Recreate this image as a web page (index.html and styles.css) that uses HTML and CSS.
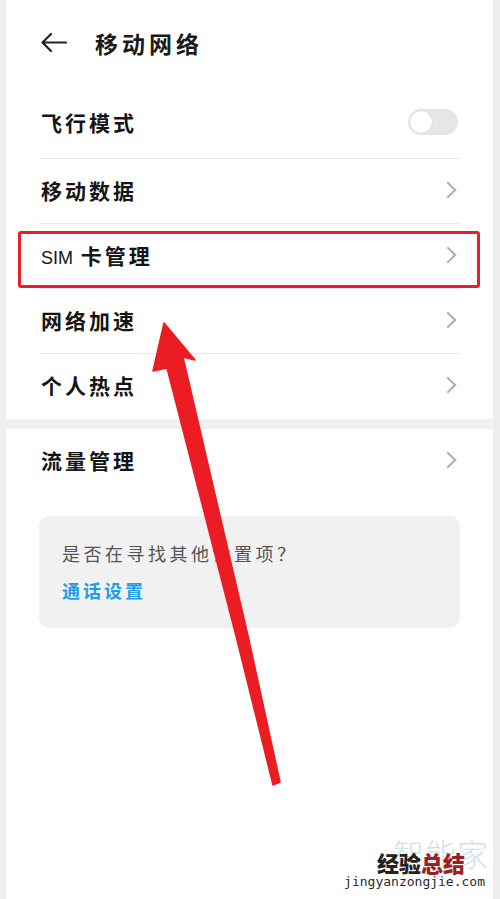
FILE: index.html
```html
<!DOCTYPE html>
<html lang="zh-CN">
<head>
    <meta charset="UTF-8">
    <meta name="viewport" content="width=device-width, initial-scale=1.0">
    <title>移动网络</title>
    <link rel="stylesheet" href="styles.css">
</head>
<body>

    <div class="page">
        <div class="header">
            <svg class="back" width="26" height="20" viewBox="0 0 26 20">
                <path d="M2 9.5 H25 M10 1 L1.5 9.5 L10 18" fill="none" stroke="#222" stroke-width="2.2" stroke-linecap="round" stroke-linejoin="round"/>
            </svg>
            <h1>移动网络</h1>
        </div>

        <div class="list">
            <div class="row first">
                <span class="label">飞行模式</span>
                <div class="toggle"><div class="knob"></div></div>
            </div>
            <div class="row">
                <span class="label">移动数据</span>
                <span class="chev"></span>
            </div>
            <div class="row">
                <span class="label"><span class="latin">SIM</span> 卡管理</span>
                <span class="chev"></span>
            </div>
            <div class="row">
                <span class="label">网络加速</span>
                <span class="chev"></span>
            </div>
            <div class="row">
                <span class="label">个人热点</span>
                <span class="chev"></span>
            </div>
        </div>

        <div class="band"></div>

        <div class="list">
            <div class="row">
                <span class="label">流量管理</span>
                <span class="chev"></span>
            </div>
        </div>

        <div class="card">
            <p class="hint">是否在寻找其他设置项？</p>
            <p class="link">通话设置</p>
        </div>

        <!-- annotation drawn over the screenshot -->
        <div class="highlight"></div>
        <svg class="arrow" width="500" height="899" viewBox="0 0 500 899">
            <polygon points="164,323 195,360 183,357 249,640 280,782 273,785 237,640 167,368 153,371" fill="#ec1c24" stroke="#ec1c24" stroke-width="1.5" stroke-linejoin="round"/>
        </svg>

        <div class="watermark">
            <div class="wm-faint">智能家</div>
            <div class="wm-main">经验<span class="wm-red">总结</span></div>
            <div class="wm-url">jingyanzongjie.com</div>
        </div>
    </div>

</body>
</html>
```

FILE: styles.css
```css
body {
    margin: 0;
    background-color: #eeeeee;
    font-family: "Noto Sans CJK SC", "Noto Sans", sans-serif;
}

.page {
    position: relative;
    margin: 0 7px 0 6px;
    min-height: 899px;
    background-color: white;
    overflow: hidden;
}

.header {
    height: 94px;
    display: flex;
    align-items: center;
    padding-left: 35px;
    padding-bottom: 8px;
    box-sizing: border-box;
}

.back {
    margin-right: 28px;
}

h1 {
    margin: 0;
    font-size: 23px;
    font-weight: 700;
    letter-spacing: 4px;
    color: #1a1a1a;
}

.list {
    padding: 0 33px;
}

.row {
    height: 65px;
    display: flex;
    align-items: center;
    justify-content: space-between;
    padding-left: 2px;
    padding-bottom: 3px;
    border-bottom: 1px solid #e9e9e9;
    box-sizing: border-box;
}

.row.first {
    padding-bottom: 9px;
}

.row:last-child {
    border-bottom: none;
}

.label {
    font-size: 21px;
    font-weight: 700;
    letter-spacing: 3px;
    color: #151515;
}

.latin {
    font-family: "Liberation Sans", sans-serif;
    font-weight: 400;
    font-size: 18px;
    letter-spacing: 0;
}

.chev {
    width: 10px;
    height: 10px;
    margin-right: 6px;
    border-top: 2px solid #b0b0b0;
    border-right: 2px solid #b0b0b0;
    transform: rotate(45deg);
}

.toggle {
    width: 50px;
    height: 26px;
    border-radius: 13px;
    background-color: #e6e6e6;
    margin-right: 2px;
    display: flex;
    align-items: center;
    padding-left: 2px;
    box-sizing: border-box;
}

.knob {
    width: 22px;
    height: 22px;
    border-radius: 50%;
    background-color: white;
    box-shadow: 0 0 1px rgba(0, 0, 0, 0.25);
}

.band {
    height: 10px;
    background-color: #f1f1f1;
}

.card {
    margin: 22px 33px 0;
    height: 112px;
    padding: 24px 23px 0;
    box-sizing: border-box;
    background-color: #f1f1f1;
    border-radius: 10px;
}

.hint {
    margin: 0 0 11px;
    font-size: 18px;
    letter-spacing: 3.5px;
    color: #555555;
}

.link {
    margin: 0;
    font-size: 18px;
    font-weight: 700;
    letter-spacing: 3px;
    color: #1e9de8;
}

.highlight {
    position: absolute;
    left: 12px;
    top: 231px;
    width: 462px;
    height: 57px;
    border: 3px solid #e8202a;
    border-radius: 3px;
    box-sizing: border-box;
}

.arrow {
    position: absolute;
    left: -6px;
    top: 0;
}

.watermark {
    position: absolute;
    right: 0;
    top: 836px;
    width: 150px;
    height: 56px;
}

.wm-faint {
    position: absolute;
    right: 4px;
    top: 0;
    font-size: 31px;
    font-weight: 300;
    letter-spacing: 1px;
    color: #d3e3e5;
    line-height: 34px;
}

.wm-main {
    position: absolute;
    right: 28px;
    top: 14px;
    font-size: 22px;
    font-weight: 900;
    line-height: 24px;
    color: #222222;
}

.wm-red {
    color: #9e1f22;
}

.wm-url {
    position: absolute;
    right: 8px;
    top: 38px;
    font-family: "DejaVu Sans Mono", monospace;
    font-size: 13px;
    line-height: 16px;
    color: #2a2a2a;
}
```
